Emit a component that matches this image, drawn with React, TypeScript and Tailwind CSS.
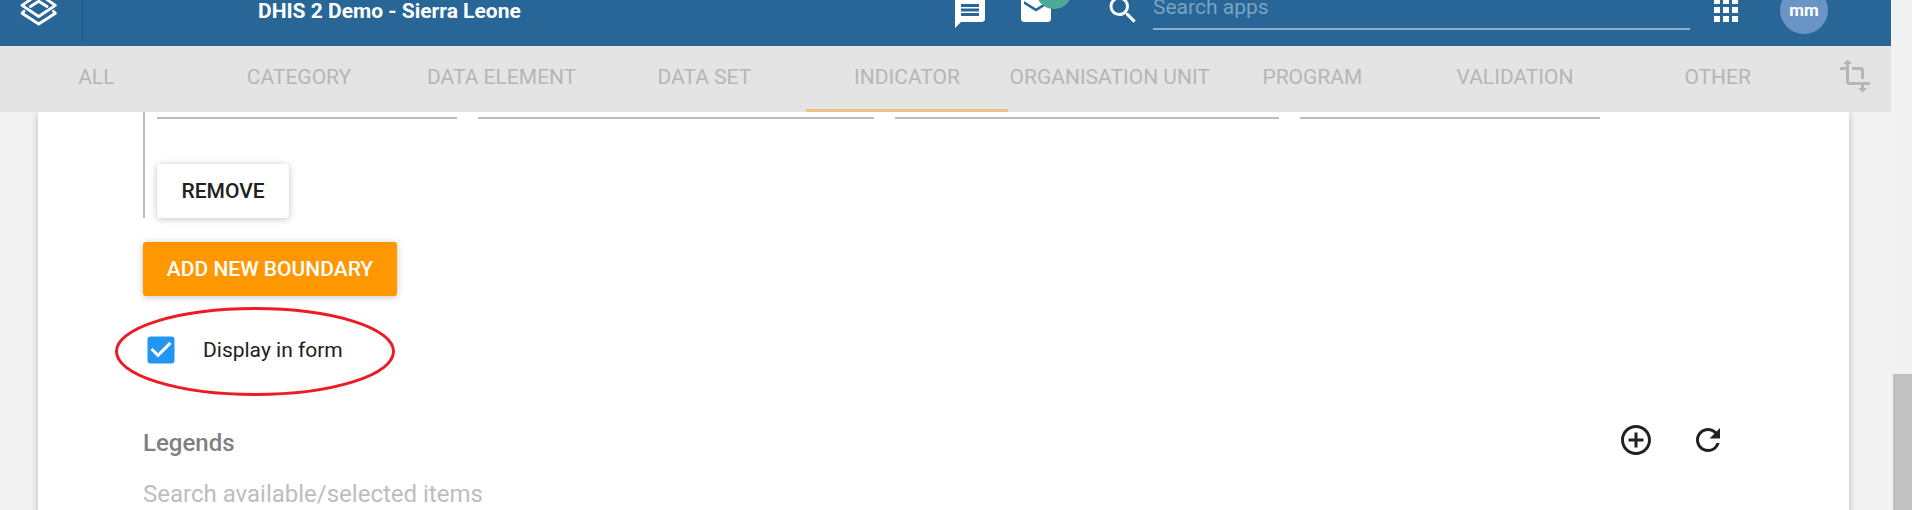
import { MdMessage, MdMail, MdSearch, MdApps, MdTransform, MdCheckBox, MdControlPoint, MdRefresh } from "react-icons/md";

const tabs = [
  "ALL",
  "CATEGORY",
  "DATA ELEMENT",
  "DATA SET",
  "INDICATOR",
  "ORGANISATION UNIT",
  "PROGRAM",
  "VALIDATION",
  "OTHER",
];

function Logo() {
  return (
    <svg className="mt-[-12px] ml-[20px] h-[38px] w-[38px] shrink-0" viewBox="0 0 38 38" fill="none" stroke="#fff" strokeWidth="2.8" strokeLinejoin="round" strokeLinecap="round">
      <path d="M2 17.3 18.7 6 35.4 17.3 18.7 28.5z" />
      <path d="M10.5 18.5 18.7 13.3 27 18.5" />
      <path d="M4 23.2 2 25.2 18.7 36 35.4 25.2 33.4 23.2" />
    </svg>
  );
}

function Header() {
  return (
    <header className="flex h-[46px] items-start overflow-hidden bg-[#276696] text-white">
      <Logo />
      <div className="ml-[24px] h-[41px] w-px shrink-0 bg-[#20557c]" />
      <h1 className="mt-[-5px] ml-[175px] w-[694px] shrink-0 text-[21px] leading-[32px] font-bold whitespace-nowrap">
        DHIS 2 Demo - Sierra Leone
      </h1>
      <MdMessage className="mt-[-5px] size-[36px] shrink-0" />
      <div className="relative mt-[-8px] ml-[30px] shrink-0">
        <MdMail className="size-[36px]" />
        <span className="absolute top-[-19px] left-[18px] size-[36px] rounded-full bg-[#4da999]" />
      </div>
      <MdSearch className="mt-[-8px] ml-[51px] size-[36px] shrink-0" />
      <div className="ml-[12px] h-[30px] w-[537px] shrink-0 border-b-2 border-[#8cb0cc]">
        <div className="text-[21px] leading-[14px] text-[#7ba3c2]">Search apps</div>
      </div>
      <MdApps className="mt-[-8px] ml-[18px] size-[36px] shrink-0" />
      <div className="mt-[-14px] ml-[36px] flex size-[48px] shrink-0 items-center justify-center rounded-full bg-[#6a94c4] pt-[2px] text-[17px] font-bold">
        mm
      </div>
    </header>
  );
}

function TabBar() {
  return (
    <nav className="flex h-[66px] overflow-hidden bg-[#e4e4e4] text-[21px] text-[#b6b6b6]">
      <div className="ml-[-5px] flex w-[1824px] shrink-0">
        {tabs.map((tab) => (
          <div
            key={tab}
            className={
              tab === "INDICATOR"
                ? "flex flex-1 basis-0 justify-center border-b-[3px] border-[#eec588] pt-[15px] leading-[32px] whitespace-nowrap"
                : "flex flex-1 basis-0 justify-center pt-[15px] leading-[32px] whitespace-nowrap"
            }
          >
            {tab}
          </div>
        ))}
      </div>
      <MdTransform className="mt-[12px] ml-[18px] size-[36px] shrink-0" />
    </nav>
  );
}

export default function App() {
  return (
    <div className="flex h-[510px] w-[1912px] overflow-hidden bg-[#f1f1f1] font-[Roboto,sans-serif]">
      <div className="flex w-[1891px] flex-col bg-[#f3f3f3]">
        <Header />
        <TabBar />
        <div className="flex-1 overflow-hidden">
          <main className="ml-[38px] flex h-[420px] w-[1811px] flex-col items-start bg-white pl-[105px] shadow-[0_1px_9px_rgba(0,0,0,0.12),0_1px_6px_rgba(0,0,0,0.12)]">
            <section className="flex h-[106px] flex-col items-start border-l-2 border-[#bdbdbd] pl-[12px]">
              <div className="mt-[5px] flex gap-[21px]">
                <div className="h-[2px] w-[300px] bg-[#bdbdbd]" />
                <div className="h-[2px] w-[396px] bg-[#bdbdbd]" />
                <div className="h-[2px] w-[384px] bg-[#bdbdbd]" />
                <div className="h-[2px] w-[300px] bg-[#bdbdbd]" />
              </div>
              <button className="mt-[45px] h-[54px] w-[132px] rounded-[3px] bg-white pt-[2px] text-[21px] font-medium text-[#212121] shadow-[0_1px_9px_rgba(0,0,0,0.12),0_1px_6px_rgba(0,0,0,0.12)]">
                REMOVE
              </button>
            </section>
            <button className="mt-[24px] h-[54px] w-[254px] shrink-0 rounded-[3px] bg-[#ff9800] pt-[2px] text-[21px] font-medium whitespace-nowrap text-white shadow-[0_1px_9px_rgba(0,0,0,0.12),0_1px_6px_rgba(0,0,0,0.12)]">
              ADD NEW BOUNDARY
            </button>
            <label className="relative mt-[36px] flex h-[36px] items-center gap-[24px] text-[21px] text-[#212121]">
              <MdCheckBox className="size-[36px] text-[#2196f3]" />
              <span className="pt-[2px]">Display in form</span>
              <svg className="absolute top-[-26px] left-[-30px] h-[92px] w-[284px]" viewBox="0 0 284 92" fill="none">
                <ellipse cx="142" cy="45.5" rx="138.5" ry="43" stroke="#ed1c24" strokeWidth="3" />
              </svg>
            </label>
            <div className="mt-[54px] flex h-[36px] w-[1583px] items-center">
              <h2 className="mt-[6px] flex-1 text-[24px] leading-[36px] font-medium text-[#808080]">Legends</h2>
              <MdControlPoint className="size-[36px] text-[#212121]" />
              <MdRefresh className="ml-[36px] size-[36px] text-[#212121]" />
            </div>
            <div className="mt-[18px] text-[24px] leading-[36px] text-[#bdbdbd]">Search available/selected items</div>
          </main>
        </div>
      </div>
      <div className="flex w-[21px] flex-col items-end justify-end">
        <div className="h-[136px] w-[19px] bg-[#c1c1c1]" />
      </div>
    </div>
  );
}
